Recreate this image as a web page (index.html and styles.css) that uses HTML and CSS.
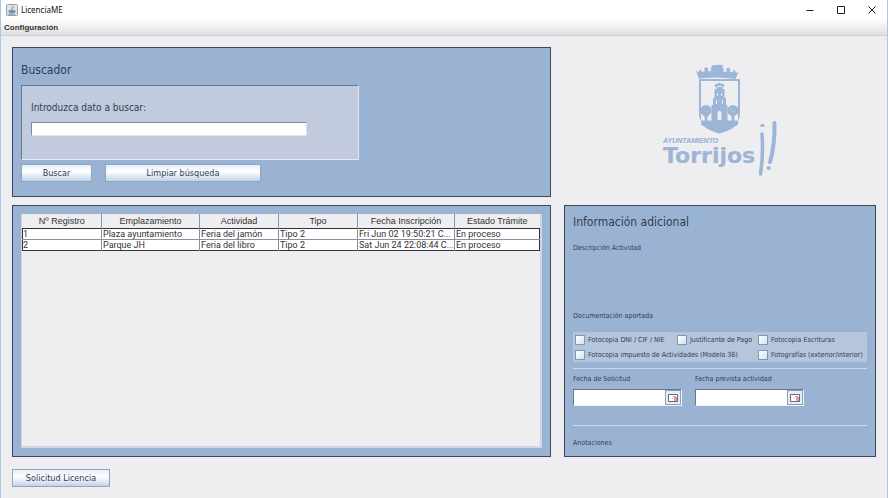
FILE: index.html
```html
<!DOCTYPE html>
<html lang="es">
<head>
<meta charset="utf-8">
<title>LicenciaME</title>
<link rel="stylesheet" href="styles.css">
</head>
<body>
<div class="window">
  <header class="titlebar">
    <svg class="app-icon" viewBox="0 0 12 12" aria-hidden="true">
      <rect x=".5" y=".5" width="11" height="11" rx="1" fill="#dbe5ec" stroke="#8da3b3"/>
      <path d="M6.500 1.500C8 3 4 4 6 6M8 3C6.500 4 6.500 4.500 7 5.500" fill="none" stroke="#d58a6c"/>
      <path d="M3 6.500h5v1c0 2-5 2-5 0zM8 7c2-.5 1.500 1.500 0 1.500M2.500 10.200h6.500" fill="#7f9db5" stroke="#60839f" stroke-width=".8"/>
    </svg>
    <span class="app-name">LicenciaME</span>
    <div class="window-controls">
      <button type="button" aria-label="Minimizar"><svg viewBox="0 0 8 8"><path d="M0.500 4.500h7"/></svg></button>
      <button type="button" aria-label="Maximizar"><svg viewBox="0 0 8 8"><path d="M.5.5h7v7h-7z"/></svg></button>
      <button type="button" aria-label="Cerrar"><svg viewBox="0 0 8 8"><path d="M.5.5l7 7M7.500.5l-7 7"/></svg></button>
    </div>
  </header>
  <nav class="menubar"><button type="button">Configuración</button></nav>

  <main class="content">
    <section class="panel search">
      <h1>Buscador</h1>
      <div class="search-box">
        <label for="query">Introduzca dato a buscar:</label>
        <input id="query" type="text">
      </div>
      <div class="search-actions">
        <button type="button" class="btn btn-find">Buscar</button>
        <button type="button" class="btn btn-clear">Limpiar búsqueda</button>
      </div>
    </section>

    <div class="brand">
      <svg class="logo" viewBox="0 0 160 140" role="img" aria-label="Ayuntamiento Torrijos">
        <g fill="#9db5d6">
          <path d="M59 28.500L56 21l2.500 1.500L60 19l2 3 3-1-1-2.500 2.500-1.500 2 2-1 2.500 4-.5-1-3 1.500-1-.5-1.500L75 15h8l-.5 2.500 1.500 1-1 3 4 .5-1-2.500 2-2 2.500 1.500-1 2.500 3 1 2-3 1.500 3.500 2.500-1.500-3 7.500q-20-3-40 0z"/>
          <circle cx="79.500" cy="17" r="2.500"/>
          <path fill-rule="evenodd" d="M59 29h41v34c0 11-9 18-20.500 20.500C68 81 59 74 59 63zM61 31v40h37V31z"/>
          <path d="M61 70.500h37v4l-8 5-10.500 3-10.500-3-8-5z"/>
          <path d="M79.500 32l1 1.500 3.500.5v3h-1.500v2h2v9h1.500v7h1.500v17h-16V55H73v-7h1.500v-9h2v-2H75v-3l3.500-.5z"/>
          <circle cx="66" cy="60.500" r="5.500"/><circle cx="93" cy="60.500" r="5.500"/>
          <path d="M64 63h4l-1 9h-2zM91 63h4l-1 9h-2z"/>
        </g>
        <g fill="#eeeef0">
          <path d="M77.500 70v-7q2-5 4 0v7zM77 43h1v3h-1zM81 43h1v3h-1zM76 50h1v4h-1zM82 50h1v4h-1zM77 36h5v1h-5z"/>
        </g>
        <path d="M63.500 60l2.500 2 2.500-2M90.500 60l2.500 2 2.500-2" fill="none" stroke="#b9c9df" stroke-width=".7"/>
        <g fill="none" stroke="#9db5d6" stroke-linecap="round" stroke-width="4">
          <path d="M122 84Q123.500 105 120.500 124" stroke-width="3.500"/>
          <path d="M134.500 73Q135 95 130 112"/>
        </g>
        <ellipse cx="122.500" cy="75.500" rx="2.200" ry="1.600" fill="#9db5d6"/>
        <circle cx="128.800" cy="118" r="2.100" fill="#9db5d6"/>
        <text class="logo-small" x="23" y="92.500">AYUNTAMIENTO</text>
        <text class="logo-name" x="23" y="113">Torrijos</text>
      </svg>
    </div>

    <section class="panel results">
      <div class="table-wrap">
        <table>
          <colgroup><col class="c1"><col class="c2"><col class="c3"><col class="c4"><col class="c5"><col class="c6"></colgroup>
          <thead><tr><th>Nº Registro</th><th>Emplazamiento</th><th>Actividad</th><th>Tipo</th><th>Fecha Inscripción</th><th>Estado Trámite</th></tr></thead>
          <tbody>
            <tr><td>1</td><td>Plaza ayuntamiento</td><td>Feria del jamón</td><td>Tipo 2</td><td>Fri Jun 02 19:50:21 C...</td><td>En proceso</td></tr>
            <tr><td>2</td><td>Parque JH</td><td>Feria del libro</td><td>Tipo 2</td><td>Sat Jun 24 22:08:44 C...</td><td>En proceso</td></tr>
          </tbody>
        </table>
      </div>
    </section>

    <section class="panel info">
      <h2>Información adicional</h2>
      <h3 class="description">Descripción Actividad</h3>
      <h3>Documentación aportada</h3>
      <div class="documents">
        <label><input type="checkbox">Fotocopia DNI / CIF / NIE</label>
        <label><input type="checkbox">Justificante de Pago</label>
        <label><input type="checkbox">Fotocopia Escrituras</label>
        <label class="wide"><input type="checkbox">Fotocopia impuesto de Actividades (Modelo 36)</label>
        <label><input type="checkbox">Fotografías (exterior/interior)</label>
      </div>
      <div class="dates">
        <div class="date">
          <label for="requested">Fecha de Solicitud</label>
          <div class="date-field">
            <input id="requested" type="text">
            <button type="button" aria-label="Elegir fecha de solicitud"><svg viewBox="0 0 10 8"><path d="M.5.5h9v7h-9z" fill="#fff" stroke="#666c77"/><path d="M5 2h3v1H5zM6 3h3v4H6zM4 4h1v1H4z" fill="#e39a9f"/></svg></button>
          </div>
        </div>
        <div class="date">
          <label for="planned">Fecha prevista actividad</label>
          <div class="date-field">
            <input id="planned" type="text">
            <button type="button" aria-label="Elegir fecha prevista"><svg viewBox="0 0 10 8"><path d="M.5.5h9v7h-9z" fill="#fff" stroke="#666c77"/><path d="M5 2h3v1H5zM6 3h3v4H6zM4 4h1v1H4z" fill="#e39a9f"/></svg></button>
          </div>
        </div>
      </div>
      <h3 class="notes">Anotaciones</h3>
    </section>

    <div class="footer"><button type="button" class="btn btn-request">Solicitud Licencia</button></div>
  </main>
</div>
</body>
</html>
```
FILE: styles.css
```css
* { box-sizing: border-box; }

body {
  margin: 0;
  background: #eeeef0;
  color: #2f3e50;
  font-family: "DejaVu Sans Condensed", "DejaVu Sans", sans-serif;
  font-size: 10px;
}

h1, h2, h3 { margin: 0; font-weight: normal; }
button, input { font: inherit; color: inherit; margin: 0; padding: 0; border-radius: 0; }

.window {
  min-height: 100vh;
  border: solid #a9c8e6;
  border-width: 0 1px;
}

.titlebar {
  display: flex;
  align-items: center;
  height: 19px;
  padding-left: 5px;
  background: #fff;
}
.app-icon { width: 12px; height: 12px; }
.app-name {
  margin-left: 3px;
  font: 8px/12px "Noto Sans", sans-serif;
  color: #111;
}
.window-controls { display: flex; margin-left: auto; }
.window-controls button {
  display: grid;
  place-items: center;
  width: 31px;
  height: 18px;
  border: 0;
  background: none;
}
.window-controls svg { width: 8px; height: 8px; fill: none; stroke: #222; }

.menubar {
  height: 17px;
  border-bottom: 1px solid #d2d2d4;
  background: linear-gradient(#fff, #dfdfe1);
}
.menubar button {
  display: block;
  padding-left: 3px;
  border: 0;
  background: none;
  color: #333;
  font: bold 8px/18px "Liberation Sans", sans-serif;
}

.content {
  display: grid;
  grid-template-columns: 539fr 312fr;
  grid-template-rows: 150px 252px auto;
  gap: 8px 13px;
  padding: 11px 11px 10px;
}

.panel { border: 1px solid #39475a; background: #9bb3d3; }

.search { padding: 14px 8px 0; }
.search h1 { font-size: 12px; line-height: 16px; }
.search-box {
  width: 338px;
  height: 75px;
  margin-top: 7px;
  padding: 15px 9px 0;
  border: 1px solid;
  border-color: #66788f #e4eaf3 #e4eaf3 #66788f;
  background: #c1cbdd;
}
.search-box label { display: block; line-height: 14px; }
.search-box input {
  display: block;
  width: 276px;
  height: 14px;
  margin-top: 7px;
  border: 1px solid #7d8ca1;
  border-right-color: #dce3ed;
  border-bottom-color: #dce3ed;
  background: #fff;
}
.search-actions { display: flex; gap: 13px; margin-top: 4px; }

.btn {
  height: 18px;
  border: 1px solid #8fa5c0;
  background: linear-gradient(#e4edf8, #fff 40%, #c3d3ea);
  font-size: 9px;
  line-height: 16px;
  text-align: center;
}
.btn-find { width: 71px; }
.btn-clear { width: 156px; }
.btn-request { width: 98px; }

.brand { display: flex; justify-content: center; align-items: flex-start; padding-top: 3px; }
.logo { width: 160px; height: 140px; }
.logo-small, .logo-name { fill: #9db5d6; }
.logo-small { font: italic bold 7px "Liberation Sans", sans-serif; stroke: #9db5d6; stroke-width: .2px; }
.logo-name { font: bold 22px "DejaVu Sans", sans-serif; stroke: #9db5d6; stroke-width: .2px; }

.results { padding: 8px; }
.table-wrap {
  height: 100%;
  border: 1px solid #cbd7e8;
  border-width: 0 2px 2px 1px;
  background: #eeeef0;
}
table {
  width: 100%;
  border-collapse: collapse;
  table-layout: fixed;
  font: 9px/11px "Liberation Sans", sans-serif;
  color: #333;
}
.c1, .c3, .c4 { width: 79px; }
.c2 { width: 98px; }
.c5 { width: 97px; }
th { height: 14px; padding: 2px 0 0; font-weight: normal; }
th + th { border-left: 1px solid #8297b1; }
tbody { border: 1px solid #333; background: #fff; }
td {
  height: 11px;
  padding: 0;
  font-family: Roboto, sans-serif;
  line-height: 10px;
  white-space: nowrap;
}
td + td { padding-left: 1px; border-left: 1px solid #8591a2; }
tr + tr td { border-top: 1px solid #8591a2; }

.info { padding: 8px 8px 0; }
.info h2 { font-size: 12px; line-height: 16px; }
.info h3, .info label { font-size: 7px; line-height: 10px; }
.info .description { margin: 13px 0 58px; }

.documents {
  display: grid;
  grid-template-columns: 102px 81px 1fr;
  align-items: center;
  height: 30px;
  margin-top: 11px;
  padding: 0 2px;
  background: #b4c5dc;
}
.documents label { display: flex; align-items: center; gap: 3px; white-space: nowrap; }
.documents .wide { grid-column: span 2; }
.documents input {
  appearance: none;
  width: 10px;
  height: 10px;
  border: 1px solid #7f97b5;
  background: linear-gradient(135deg, #fff, #d5e2f2);
}

.dates {
  display: flex;
  gap: 13px;
  height: 58px;
  margin-top: 6px;
  padding-top: 5px;
  border: solid #cbd9eb;
  border-width: 1px 0;
}
.date { width: 109px; }
.date label { display: block; }
.date-field {
  display: flex;
  height: 17px;
  margin-top: 5px;
  border: 1px solid;
  border-color: #66788f #f1f5fa #f1f5fa #66788f;
  background: #fff;
}
.date-field input { flex: 1; min-width: 0; border: 0; background: #fff; }
.date-field button {
  display: grid;
  place-items: center;
  width: 16px;
  border: 1px solid #8ba0bb;
  background: #e4ecf6;
}
.date-field svg { width: 10px; height: 8px; }
.notes { margin-top: 12px; }

.footer { grid-column: 1 / -1; padding-top: 4px; }
.footer .btn { display: block; }
```
